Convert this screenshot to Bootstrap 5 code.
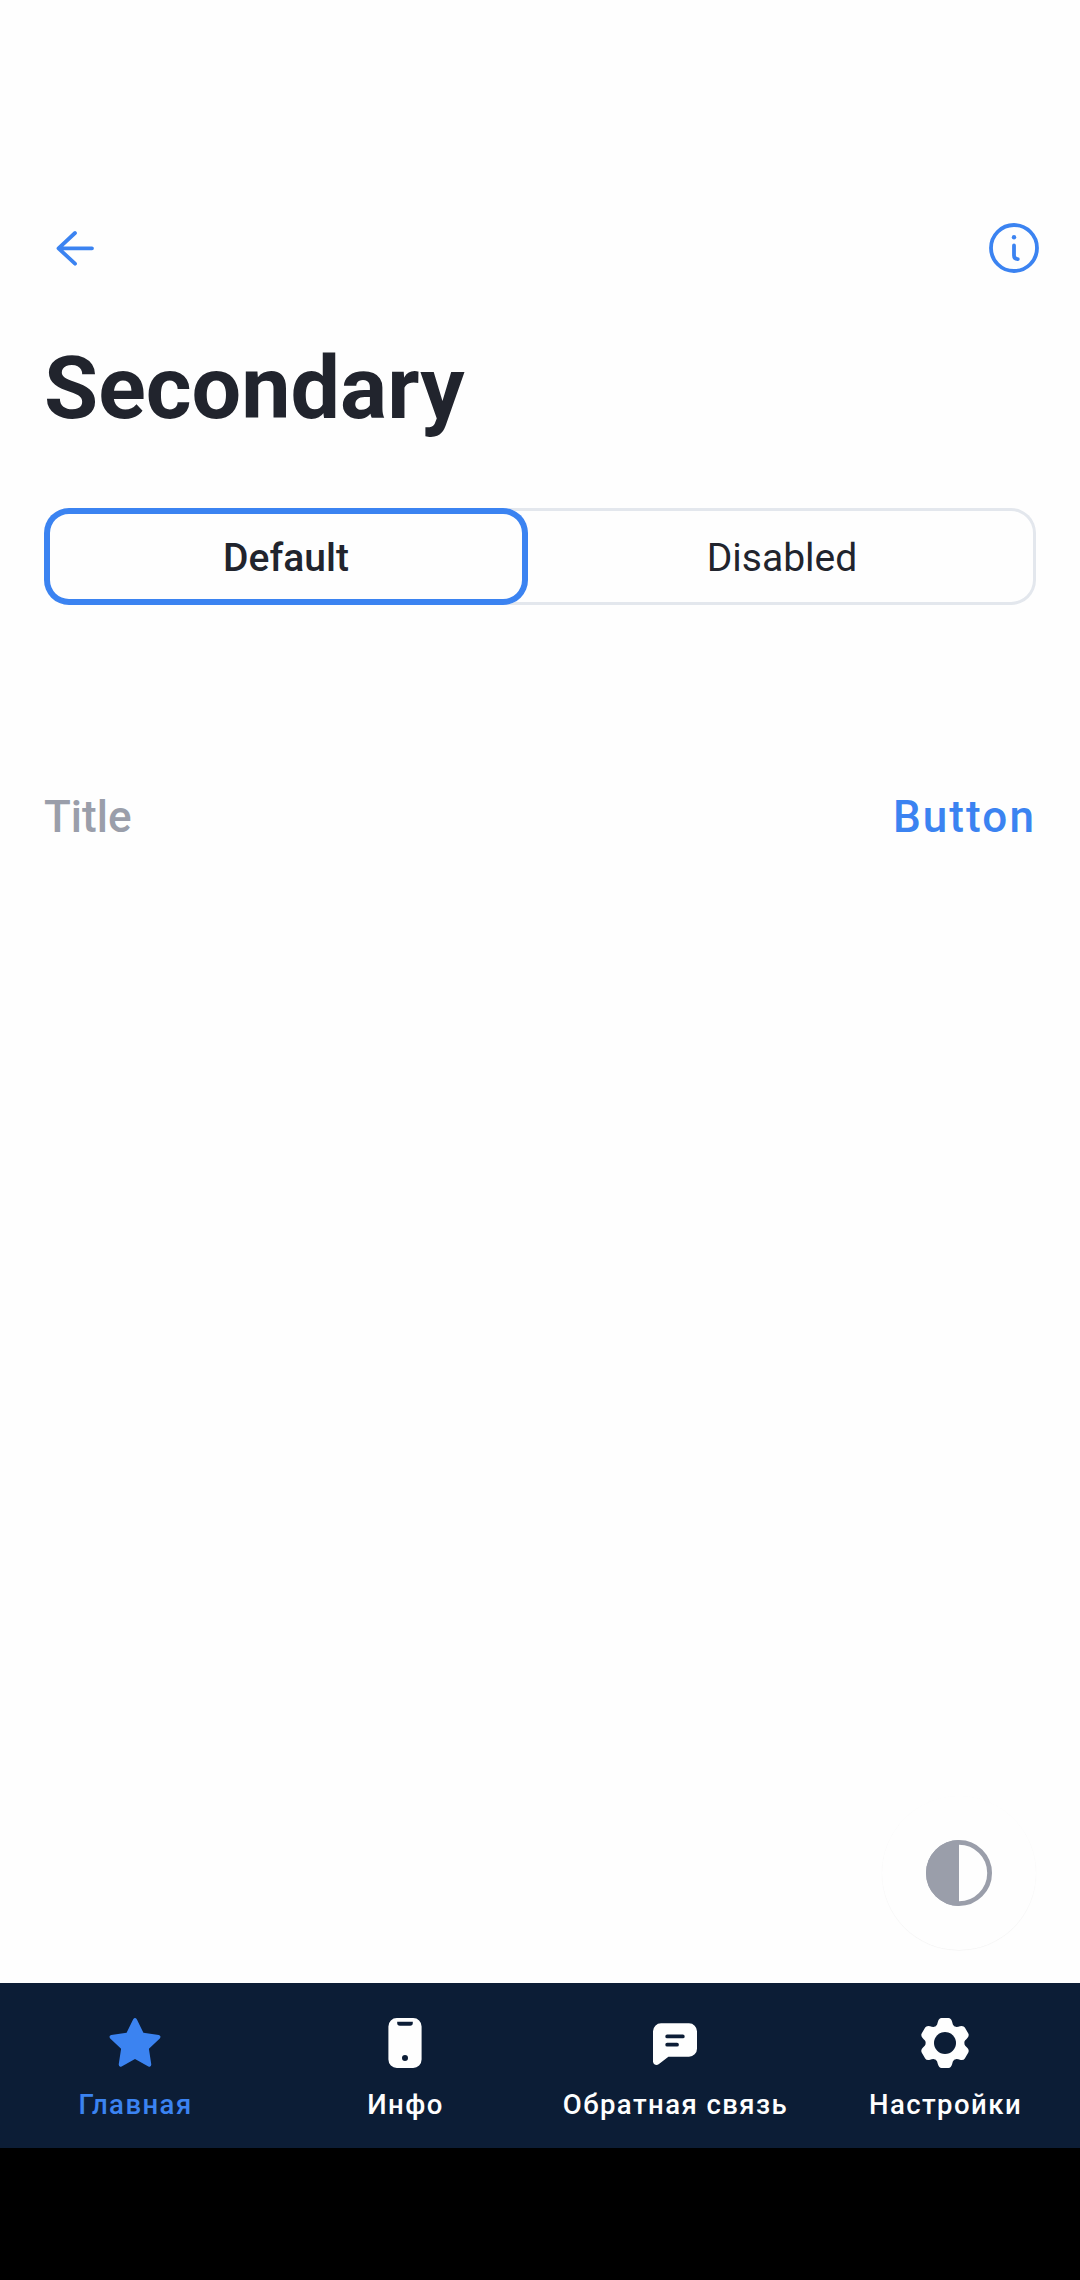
<!DOCTYPE html>
<html lang="ru">
<head>
<meta charset="utf-8">
<meta name="viewport" content="width=device-width, initial-scale=1">
<title>Secondary</title>
<link href="https://cdn.jsdelivr.net/npm/bootstrap@5.3.0/dist/css/bootstrap.min.css" rel="stylesheet">
<style>
  :root { --accent: #3b83f1; --ink: #21242d; --muted: #9a9eaa; --line: #e3e7ed; --navy: #0c1d36; }
  body { font-family: Roboto, "Noto Sans", sans-serif; background: #fefefe; color: var(--ink); }
  svg { display: block; }
  .screen { height: 2280px; overflow: hidden; }
  .app-top { padding: 215px 33px 0 42px; height: 281px; }
  .icon-btn { color: var(--accent); }
  .page-title { font-size: 88px; line-height: 104px; font-weight: 700; padding: 55px 44px 0; }
  .segments { margin: 68px 44px 0; height: 97px; border-radius: 25px; box-shadow: inset 0 0 0 3px var(--line); }
  .segment { font-size: 39px; line-height: 45px; color: var(--ink); padding: 4px 0 0; border-radius: 25px; }
  .segment-on { flex: 0 0 484px; box-shadow: inset 0 0 0 6px var(--accent); background: #fefefe; font-weight: 500; }
  .title-row { margin: 186px 44px 0; font-size: 44px; line-height: 52px; font-weight: 500; }
  .title-row .caption-text { color: var(--muted); }
  .title-row button { color: var(--accent); font: inherit; letter-spacing: 2.1px; }
  .fab { width: 154px; height: 154px; margin: 0 44px 33px; background: #fefefe; box-shadow: 0 .5px 1px rgba(0,0,0,.06); color: var(--muted); }
  .tabbar { height: 165px; background: var(--navy); }
  .tabbar a { flex: 1 1 0; color: #fefefe; padding-top: 27px; font-size: 27.5px; line-height: 32px; font-weight: 500; letter-spacing: 1.45px; white-space: nowrap; }
  .tabbar a.current { color: var(--accent); }
  .tabbar span { margin-top: 13px; padding-left: 1px; }
  .system-bar { height: 132px; background: #000; }
</style>
</head>
<body>
<div class="screen d-flex flex-column">
  <header class="app-top d-flex justify-content-between">
    <button class="icon-btn btn p-0 border-0" aria-label="Назад">
      <svg width="66" height="66" viewBox="0 0 66 66" fill="none" stroke="currentColor" stroke-width="3.8" stroke-linecap="round" stroke-linejoin="round"><path d="M50 33.3H16.5M33 18 16.5 33.3 33 48.7"/></svg>
    </button>
    <button class="icon-btn btn p-0 border-0" aria-label="Info">
      <svg width="66" height="66" viewBox="0 0 66 66" fill="none" stroke="currentColor" stroke-width="3.8" stroke-linecap="round"><circle cx="33" cy="33" r="23"/><path d="M33 30.5V40.5Q33 43.9 36.8 44.1"/><circle cx="33" cy="22.3" r="2.2" fill="currentColor" stroke="none"/></svg>
    </button>
  </header>
  <h1 class="page-title m-0">Secondary</h1>
  <div class="segments d-flex">
    <button class="segment segment-on btn border-0">Default</button>
    <button class="segment btn border-0 flex-fill">Disabled</button>
  </div>
  <div class="title-row d-flex justify-content-between align-items-center">
    <span class="caption-text">Title</span>
    <button class="btn p-0 border-0">Button</button>
  </div>
  <button class="fab btn rounded-circle border-0 p-0 mt-auto align-self-end d-flex justify-content-center align-items-center" aria-label="Theme">
    <svg width="66" height="66" viewBox="0 0 66 66"><circle cx="33" cy="33" r="30.6" fill="none" stroke="currentColor" stroke-width="4.8"/><path d="M33 0a33 33 0 0 0 0 66Z" fill="currentColor"/></svg>
  </button>
  <nav class="tabbar d-flex flex-shrink-0">
    <a href="#" class="current d-flex flex-column align-items-center text-decoration-none">
      <svg width="66" height="66" viewBox="0 0 66 66" fill="currentColor"><path d="M31.2 9.2Q33 6.6 34.8 9.2L41.4 22.7 56.8 25Q59.6 25.9 57.8 28.4L46.9 38.7 49.3 54.5Q49.2 57.4 46.4 56.4L33 49.1 19.6 56.4Q16.8 57.4 16.7 54.5L19.1 38.7 8.2 28.4Q6.4 25.9 9.2 25L24.6 22.7Z"/></svg>
      <span>Главная</span>
    </a>
    <a href="#" class="d-flex flex-column align-items-center text-decoration-none">
      <svg width="66" height="66" viewBox="0 0 66 66" fill="currentColor"><path fill-rule="evenodd" d="M24.8 8h16.400a8.400 8.400 0 0 1 8.400 8.400v33.200a8.400 8.400 0 0 1-8.400 8.400h-16.400a8.400 8.400 0 0 1-8.400-8.400v-33.200a8.400 8.400 0 0 1 8.400-8.400ZM25.200 11.800v1.200q0 2.700 2.700 2.700h10.200q2.700 0 2.700-2.700v-1.200ZM33 45a3 3 0 1 0 0 6 3 3 0 0 0 0-6Z"/></svg>
      <span>Инфо</span>
    </a>
    <a href="#" class="d-flex flex-column align-items-center text-decoration-none">
      <svg width="66" height="66" viewBox="0 0 66 66"><path fill="currentColor" d="M19 13.300H47a8 8 0 0 1 8 8v17.400a8 8 0 0 1-8 8H26.400L17 54Q14.800 55.600 12.700 54.600 11 53.700 11 51.500V21.300a8 8 0 0 1 8-8Z"/><path d="M25.200 26.400H40.800M25.200 34.700H35" stroke="#0c1d36" stroke-width="3.800" stroke-linecap="round"/></svg>
      <span>Обратная связь</span>
    </a>
    <a href="#" class="d-flex flex-column align-items-center text-decoration-none">
      <svg width="66" height="66" viewBox="-33 -33 66 66" fill="currentColor">
        <defs><path id="tooth" d="M-9.700-16.800C-7.800-17.500-7.600-19.500-7.100-21.300Q-6-24.900-3.500-24.900H3.500Q6-24.900 7.100-21.300C7.600-19.500 7.800-17.500 9.700-16.800L0 0Z"/></defs>
        <circle r="18.500"/>
        <use href="#tooth"/><use href="#tooth" transform="rotate(60)"/><use href="#tooth" transform="rotate(120)"/><use href="#tooth" transform="rotate(180)"/><use href="#tooth" transform="rotate(240)"/><use href="#tooth" transform="rotate(300)"/>
        <circle r="11" fill="#0c1d36"/>
      </svg>
      <span>Настройки</span>
    </a>
  </nav>
  <div class="system-bar flex-shrink-0"></div>
</div>
<script src="https://cdn.jsdelivr.net/npm/bootstrap@5.3.0/dist/js/bootstrap.bundle.min.js"></script>
</body>
</html>
